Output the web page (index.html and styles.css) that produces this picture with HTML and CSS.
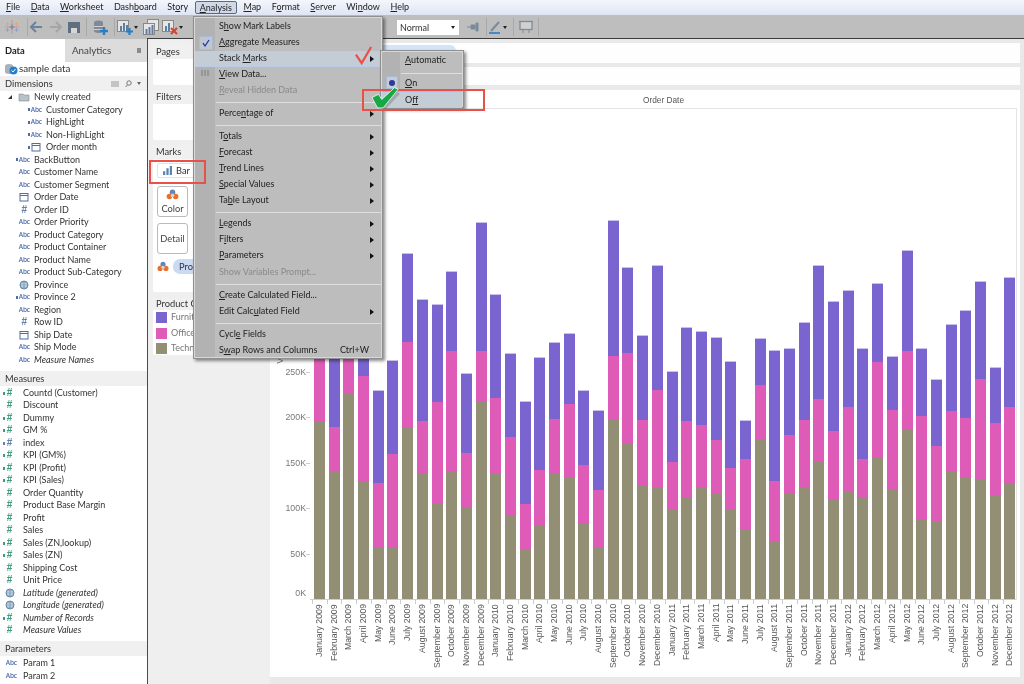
FILE: index.html
```html
<!DOCTYPE html>
<html lang="en">
<head>
<meta charset="utf-8">
<title>Tableau - Stack Marks</title>
<link rel="stylesheet" href="styles.css">
</head>
<body>
<svg class="defs" width="0" height="0">
  <symbol id="cal" viewBox="0 0 10 10"><rect x="1" y="1.5" width="8" height="7.5" fill="none" stroke="#4f6f9f"/><path d="M1 3.5h8" stroke="#4f6f9f"/></symbol>
  <symbol id="globe" viewBox="0 0 10 10"><circle cx="5" cy="5" r="4" fill="#cfdbe8" stroke="#5f87a8"/><path d="M1 5h8M5 1v8M2 2.8h6M2 7.2h6" stroke="#5f87a8" stroke-width=".6"/></symbol>
  <symbol id="mk" viewBox="0 0 14 12"><circle cx="7" cy="3.6" r="3" fill="#5f87b8"/><circle cx="3.6" cy="8.2" r="3" fill="#e8702a"/><circle cx="10.4" cy="8.2" r="3" fill="#e8702a"/><circle cx="7" cy="7" r="2" fill="#c9d4e2"/></symbol>
  <symbol id="barsico" viewBox="0 0 14 12"><path d="M1 7h3v5H1zM5.5 3h3v9h-3zM10 0h3v12h-3z" fill="#5b86ad"/></symbol>
</svg>
<div class="app">
  <nav class="menubar">
    <span class="mi"><u>F</u>ile</span><span class="mi"><u>D</u>ata</span><span class="mi"><u>W</u>orksheet</span><span class="mi">Dash<u>b</u>oard</span><span class="mi">St<u>o</u>ry</span><span class="mi mi-open"><u>A</u>nalysis</span><span class="mi"><u>M</u>ap</span><span class="mi">F<u>o</u>rmat</span><span class="mi"><u>S</u>erver</span><span class="mi">Wi<u>n</u>dow</span><span class="mi"><u>H</u>elp</span>
  </nav>

  <div class="toolbar">
    <svg class="tb" viewBox="0 0 16 16"><g opacity=".8"><path d="M8 1v14M1 8h14" stroke="#d88a80" stroke-width="1.100"/><path d="M3.500 3v4M1.500 5h4M12.500 3v4M10.500 5h4" stroke="#e6a060" stroke-width=".9"/><path d="M3.500 9v4M1.500 11h4M12.500 9v4M10.500 11h4" stroke="#7f9cc4" stroke-width=".9"/><path d="M8 5.500v5M5.500 8h5" stroke="#4f7fa8" stroke-width="1.100"/></g></svg>
    <i class="tsep ml7"></i>
    <svg class="tb" viewBox="0 0 16 16"><path d="M14 8H3M8 3 3 8l5 5" fill="none" stroke="#6d8299" stroke-width="2"/></svg>
    <svg class="tb ml4" viewBox="0 0 16 16"><path d="M2 8h11M8 3l5 5-5 5" fill="none" stroke="#a5a5a5" stroke-width="2"/></svg>
    <svg class="tb ml2" viewBox="0 0 16 16"><path d="M2 3h12v11H2z" fill="#5f6f80"/><path d="M5 9h6v5H5z" fill="#d6d6d6"/></svg>
    <i class="tsep ml4"></i>
    <svg class="tb ml5" viewBox="0 0 16 16"><ellipse cx="6.500" cy="3.500" rx="4.500" ry="2" fill="#7f8a96"/><path d="M2 4v8c0 1 2 2 4.500 2s4.500-1 4.500-2V4z" fill="#7f8a96"/><path d="M2 7.500h9M2 10.500h9" stroke="#d0d0d0"/><path d="M12 8v8M8 12h8" stroke="#2a7fc4" stroke-width="2.400"/></svg>
    <i class="tsep ml6"></i>
    <svg class="tb ml2" viewBox="0 0 16 16"><rect x=".5" y="1.500" width="11" height="11" fill="#e6e6e6" stroke="#888"/><path d="M3 7h2v5H3zM6 4h2v8H6zM9 6h2v6H9z" fill="#5f7f9f"/><path d="M12.500 9v7M9 12.500h7" stroke="#2a7fc4" stroke-width="2.200"/></svg>
    <i class="caret ml1"></i>
    <svg class="tb ml5" viewBox="0 0 16 16"><rect x="4.500" y=".5" width="11" height="11" fill="#e6e6e6" stroke="#888"/><rect x=".5" y="4.500" width="11" height="11" fill="#e6e6e6" stroke="#888"/><path d="M2.500 10h2v5h-2zM5.500 8h2v7h-2zM8.500 6h2v9h-2z" fill="#5f7f9f"/></svg>
    <svg class="tb ml3" viewBox="0 0 16 16"><rect x=".5" y="1.500" width="11" height="11" fill="#e6e6e6" stroke="#888"/><path d="M3 7h2v5H3zM6 4h2v8H6z" fill="#5f7f9f"/><path d="m9 9 6 6m0-6-6 6" stroke="#d0452f" stroke-width="2"/></svg>
    <i class="caret ml1"></i>
    <div class="tb-select">Normal<i class="caret caret-dark"></i></div>
    <svg class="tb ml6" viewBox="0 0 16 16"><path d="M2 8h4M6 6h4v4H6zM11 4h2v8h-2z" fill="#7a8a9a" stroke="#7a8a9a"/></svg>
    <i class="tsep ml5"></i>
    <svg class="tb" viewBox="0 0 16 16"><path d="M4 12 12 3" stroke="#7a8a9a" stroke-width="2"/><path d="M2 14h11" stroke="#4a86c8" stroke-width="2"/></svg>
    <i class="caret"></i>
    <i class="tsep ml6"></i>
    <svg class="tb ml4" viewBox="0 0 16 16"><rect x="2" y="2.500" width="12" height="8" fill="#d0d0d0" stroke="#7f8a96" stroke-width="1.300"/><path d="M5 11v3M11 11v3M1 2.500h14" stroke="#7f8a96"/></svg>
    <i class="tsep ml4"></i>
  </div>

  <div class="main">
    <aside class="side">
      <div class="tabs"><span class="tab tab-on">Data</span><span class="tab tab-off">Analytics<i class="tab-arrow"></i></span></div>
      <div class="source"><svg class="src-ic" viewBox="0 0 14 12"><ellipse cx="5" cy="3" rx="4" ry="2" fill="#a8b2bc"/><path d="M1 3v6c0 1 2 2 4 2s4-1 4-2V3z" fill="#a8b2bc"/><circle cx="9.500" cy="7.500" r="4" fill="#2a7fc4"/><path d="m7.500 7.500 1.500 1.500 2.500-3" stroke="#fff" fill="none"/></svg>sample data</div>
      <div class="sec-head">Dimensions<span class="sec-tools"><svg class="sec-ic" viewBox="0 0 9 8"><path d="M1 1v6M3 1v6M5 1v6M7 1v6" stroke="#999"/></svg><svg class="sec-ic" viewBox="0 0 8 8"><circle cx="4.500" cy="3" r="2.200" fill="none" stroke="#777"/><path d="M3 5 1 7" stroke="#777"/></svg><i class="caret caret-grey"></i></span></div>
      <ul class="fields dims">
        <li class="row"><span class="ic"><i class="tri"></i><svg class="folder" viewBox="0 0 12 9"><path d="M1 1h4l1 1h5v6H1z" fill="#b8c0c8" stroke="#7f8a96" stroke-width=".6"/></svg></span>Newly created</li>
        <li class="row nest"><span class="ic abc calc">Abc</span>Customer Category</li>
        <li class="row nest"><span class="ic abc calc">Abc</span>HighLight</li>
        <li class="row nest"><span class="ic abc calc">Abc</span>Non-HighLight</li>
        <li class="row nest"><span class="ic calc"><svg class="gly"><use href="#cal"/></svg></span>Order month</li>
        <li class="row"><span class="ic abc calc">Abc</span>BackButton</li>
        <li class="row"><span class="ic abc">Abc</span>Customer Name</li>
        <li class="row"><span class="ic abc">Abc</span>Customer Segment</li>
        <li class="row"><span class="ic"><svg class="gly"><use href="#cal"/></svg></span>Order Date</li>
        <li class="row"><span class="ic hash dimhash">#</span>Order ID</li>
        <li class="row"><span class="ic abc">Abc</span>Order Priority</li>
        <li class="row"><span class="ic abc">Abc</span>Product Category</li>
        <li class="row"><span class="ic abc">Abc</span>Product Container</li>
        <li class="row"><span class="ic abc">Abc</span>Product Name</li>
        <li class="row"><span class="ic abc">Abc</span>Product Sub-Category</li>
        <li class="row"><span class="ic"><svg class="gly"><use href="#globe"/></svg></span>Province</li>
        <li class="row"><span class="ic abc calc">Abc</span>Province 2</li>
        <li class="row"><span class="ic abc">Abc</span>Region</li>
        <li class="row"><span class="ic hash dimhash">#</span>Row ID</li>
        <li class="row"><span class="ic"><svg class="gly"><use href="#cal"/></svg></span>Ship Date</li>
        <li class="row"><span class="ic abc">Abc</span>Ship Mode</li>
        <li class="row it"><span class="ic abc">Abc</span>Measure Names</li>
      </ul>
      <div class="sec-head sec-measures">Measures</div>
      <ul class="fields meas">
        <li class="row"><span class="ic hash calc">#</span>Countd (Customer)</li>
        <li class="row"><span class="ic hash">#</span>Discount</li>
        <li class="row"><span class="ic hash calc">#</span>Dummy</li>
        <li class="row"><span class="ic hash calc">#</span>GM %</li>
        <li class="row"><span class="ic hash calc dimhash">#</span>index</li>
        <li class="row"><span class="ic hash calc">#</span>KPI (GM%)</li>
        <li class="row"><span class="ic hash calc">#</span>KPI (Profit)</li>
        <li class="row"><span class="ic hash calc">#</span>KPI (Sales)</li>
        <li class="row"><span class="ic hash">#</span>Order Quantity</li>
        <li class="row"><span class="ic hash">#</span>Product Base Margin</li>
        <li class="row"><span class="ic hash">#</span>Profit</li>
        <li class="row"><span class="ic hash">#</span>Sales</li>
        <li class="row"><span class="ic hash calc">#</span>Sales (ZN,lookup)</li>
        <li class="row"><span class="ic hash calc">#</span>Sales (ZN)</li>
        <li class="row"><span class="ic hash">#</span>Shipping Cost</li>
        <li class="row"><span class="ic hash">#</span>Unit Price</li>
        <li class="row it"><span class="ic"><svg class="gly"><use href="#globe"/></svg></span>Latitude (generated)</li>
        <li class="row it"><span class="ic"><svg class="gly"><use href="#globe"/></svg></span>Longitude (generated)</li>
        <li class="row it"><span class="ic hash calc">#</span>Number of Records</li>
        <li class="row it"><span class="ic hash">#</span>Measure Values</li>
      </ul>
      <div class="sec-head sec-params">Parameters</div>
      <ul class="fields meas">
        <li class="row"><span class="ic abc">Abc</span>Param 1</li>
        <li class="row"><span class="ic abc">Abc</span>Param 2</li>
      </ul>
    </aside>

    <div class="cards">
      <section class="card c-pages"><h3>Pages</h3></section>
      <section class="card c-filters"><h3>Filters</h3></section>
      <section class="card c-marks">
        <h3>Marks</h3>
        <div class="mark-type"><svg class="mt-ic"><use href="#barsico"/></svg>Bar</div>
        <div class="mark-btn"><svg class="mb-ic"><use href="#mk"/></svg>Color</div>
        <div class="mark-btn mark-btn-detail">Detail</div>
        <div class="mark-pill"><svg class="mp-ic"><use href="#mk"/></svg><span class="pill">Product Category</span></div>
      </section>
      <section class="card c-legend">
        <h3>Product Category</h3>
        <div class="lg"><i class="sw furn"></i>Furniture</div>
        <div class="lg"><i class="sw off"></i>Office Supplies</div>
        <div class="lg"><i class="sw tech"></i>Technology</div>
      </section>
    </div>

    <div class="view">
      <div class="shelf"><span class="shelf-pill"></span></div>
      <div class="shelf shelf-rows"></div>
      <div class="chart">
        <div class="chart-title">Order Date</div>
        <div class="pane">
          <div class="yaxis">
            <span class="ytitle">Value</span>
            <span class="yl">250K</span><span class="yl">200K</span><span class="yl">150K</span><span class="yl">100K</span><span class="yl">50K</span><span class="yl yl0">0K</span>
          </div>
          <div class="plot">
            <div class="bar"><i class="furn" style="height:50px"></i><i class="off" style="height:72px"></i><i class="tech" style="height:178px"></i></div>
            <div class="bar"><i class="furn" style="height:128px"></i><i class="off" style="height:45px"></i><i class="tech" style="height:127px"></i></div>
            <div class="bar"><i class="furn" style="height:40px"></i><i class="off" style="height:54px"></i><i class="tech" style="height:206px"></i></div>
            <div class="bar"><i class="furn" style="height:77px"></i><i class="off" style="height:106px"></i><i class="tech" style="height:117px"></i></div>
            <div class="bar"><i class="furn" style="height:93px"></i><i class="off" style="height:64px"></i><i class="tech" style="height:52px"></i></div>
            <div class="bar"><i class="furn" style="height:94px"></i><i class="off" style="height:93px"></i><i class="tech" style="height:52px"></i></div>
            <div class="bar"><i class="furn" style="height:89px"></i><i class="off" style="height:86px"></i><i class="tech" style="height:171px"></i></div>
            <div class="bar"><i class="furn" style="height:122px"></i><i class="off" style="height:52px"></i><i class="tech" style="height:126px"></i></div>
            <div class="bar"><i class="furn" style="height:98px"></i><i class="off" style="height:102px"></i><i class="tech" style="height:95px"></i></div>
            <div class="bar"><i class="furn" style="height:80px"></i><i class="off" style="height:120px"></i><i class="tech" style="height:128px"></i></div>
            <div class="bar"><i class="furn" style="height:80px"></i><i class="off" style="height:54px"></i><i class="tech" style="height:92px"></i></div>
            <div class="bar"><i class="furn" style="height:129px"></i><i class="off" style="height:50px"></i><i class="tech" style="height:198px"></i></div>
            <div class="bar"><i class="furn" style="height:104px"></i><i class="off" style="height:76px"></i><i class="tech" style="height:125px"></i></div>
            <div class="bar"><i class="furn" style="height:84px"></i><i class="off" style="height:78px"></i><i class="tech" style="height:84px"></i></div>
            <div class="bar"><i class="furn" style="height:103px"></i><i class="off" style="height:46px"></i><i class="tech" style="height:49px"></i></div>
            <div class="bar"><i class="furn" style="height:113px"></i><i class="off" style="height:55px"></i><i class="tech" style="height:74px"></i></div>
            <div class="bar"><i class="furn" style="height:77px"></i><i class="off" style="height:55px"></i><i class="tech" style="height:125px"></i></div>
            <div class="bar"><i class="furn" style="height:71px"></i><i class="off" style="height:74px"></i><i class="tech" style="height:121px"></i></div>
            <div class="bar"><i class="furn" style="height:75px"></i><i class="off" style="height:58px"></i><i class="tech" style="height:76px"></i></div>
            <div class="bar"><i class="furn" style="height:80px"></i><i class="off" style="height:58px"></i><i class="tech" style="height:51px"></i></div>
            <div class="bar"><i class="furn" style="height:136px"></i><i class="off" style="height:64px"></i><i class="tech" style="height:179px"></i></div>
            <div class="bar"><i class="furn" style="height:86px"></i><i class="off" style="height:91px"></i><i class="tech" style="height:155px"></i></div>
            <div class="bar"><i class="furn" style="height:85px"></i><i class="off" style="height:65px"></i><i class="tech" style="height:114px"></i></div>
            <div class="bar"><i class="furn" style="height:125px"></i><i class="off" style="height:97px"></i><i class="tech" style="height:112px"></i></div>
            <div class="bar"><i class="furn" style="height:91px"></i><i class="off" style="height:48px"></i><i class="tech" style="height:89px"></i></div>
            <div class="bar"><i class="furn" style="height:94px"></i><i class="off" style="height:77px"></i><i class="tech" style="height:101px"></i></div>
            <div class="bar"><i class="furn" style="height:94px"></i><i class="off" style="height:63px"></i><i class="tech" style="height:111px"></i></div>
            <div class="bar"><i class="furn" style="height:103px"></i><i class="off" style="height:53px"></i><i class="tech" style="height:106px"></i></div>
            <div class="bar"><i class="furn" style="height:107px"></i><i class="off" style="height:42px"></i><i class="tech" style="height:89px"></i></div>
            <div class="bar"><i class="furn" style="height:39px"></i><i class="off" style="height:71px"></i><i class="tech" style="height:69px"></i></div>
            <div class="bar"><i class="furn" style="height:47px"></i><i class="off" style="height:55px"></i><i class="tech" style="height:159px"></i></div>
            <div class="bar"><i class="furn" style="height:131px"></i><i class="off" style="height:60px"></i><i class="tech" style="height:58px"></i></div>
            <div class="bar"><i class="furn" style="height:87px"></i><i class="off" style="height:59px"></i><i class="tech" style="height:105px"></i></div>
            <div class="bar"><i class="furn" style="height:98px"></i><i class="off" style="height:67px"></i><i class="tech" style="height:112px"></i></div>
            <div class="bar"><i class="furn" style="height:134px"></i><i class="off" style="height:62px"></i><i class="tech" style="height:138px"></i></div>
            <div class="bar"><i class="furn" style="height:130px"></i><i class="off" style="height:68px"></i><i class="tech" style="height:100px"></i></div>
            <div class="bar"><i class="furn" style="height:117px"></i><i class="off" style="height:85px"></i><i class="tech" style="height:107px"></i></div>
            <div class="bar"><i class="furn" style="height:111px"></i><i class="off" style="height:39px"></i><i class="tech" style="height:101px"></i></div>
            <div class="bar"><i class="furn" style="height:79px"></i><i class="off" style="height:95px"></i><i class="tech" style="height:142px"></i></div>
            <div class="bar"><i class="furn" style="height:54px"></i><i class="off" style="height:80px"></i><i class="tech" style="height:109px"></i></div>
            <div class="bar"><i class="furn" style="height:101px"></i><i class="off" style="height:78px"></i><i class="tech" style="height:170px"></i></div>
            <div class="bar"><i class="furn" style="height:68px"></i><i class="off" style="height:103px"></i><i class="tech" style="height:80px"></i></div>
            <div class="bar"><i class="furn" style="height:67px"></i><i class="off" style="height:76px"></i><i class="tech" style="height:77px"></i></div>
            <div class="bar"><i class="furn" style="height:87px"></i><i class="off" style="height:61px"></i><i class="tech" style="height:127px"></i></div>
            <div class="bar"><i class="furn" style="height:108px"></i><i class="off" style="height:59px"></i><i class="tech" style="height:122px"></i></div>
            <div class="bar"><i class="furn" style="height:98px"></i><i class="off" style="height:100px"></i><i class="tech" style="height:120px"></i></div>
            <div class="bar"><i class="furn" style="height:56px"></i><i class="off" style="height:73px"></i><i class="tech" style="height:103px"></i></div>
            <div class="bar"><i class="furn" style="height:130px"></i><i class="off" style="height:76px"></i><i class="tech" style="height:116px"></i></div>
          </div>
        </div>
        <div class="xlabels">
          <span>January 2009</span><span>February 2009</span><span>March 2009</span><span>April 2009</span><span>May 2009</span><span>June 2009</span><span>July 2009</span><span>August 2009</span><span>September 2009</span><span>October 2009</span><span>November 2009</span><span>December 2009</span>
          <span>January 2010</span><span>February 2010</span><span>March 2010</span><span>April 2010</span><span>May 2010</span><span>June 2010</span><span>July 2010</span><span>August 2010</span><span>September 2010</span><span>October 2010</span><span>November 2010</span><span>December 2010</span>
          <span>January 2011</span><span>February 2011</span><span>March 2011</span><span>April 2011</span><span>May 2011</span><span>June 2011</span><span>July 2011</span><span>August 2011</span><span>September 2011</span><span>October 2011</span><span>November 2011</span><span>December 2011</span>
          <span>January 2012</span><span>February 2012</span><span>March 2012</span><span>April 2012</span><span>May 2012</span><span>June 2012</span><span>July 2012</span><span>August 2012</span><span>September 2012</span><span>October 2012</span><span>November 2012</span><span>December 2012</span>
        </div>
      </div>
    </div>
  </div>

  <div class="menu">
    <div class="item"><span>S<u>h</u>ow Mark Labels</span></div>
    <div class="item"><span class="chk"><svg viewBox="0 0 10 10"><path d="m2 5 2 3 4-6" fill="none" stroke="#1a2aa8" stroke-width="1.200"/></svg></span><span><u>A</u>ggregate Measures</span></div>
    <div class="item item-hot"><span>Stack <u>M</u>arks</span><i class="arr"></i></div>
    <div class="item"><span class="grid-ic"></span><span><u>V</u>iew Data...</span></div>
    <div class="item item-dis"><span><u>R</u>eveal Hidden Data</span></div>
    <hr>
    <div class="item"><span>Perce<u>n</u>tage of</span><i class="arr"></i></div>
    <hr>
    <div class="item"><span>T<u>o</u>tals</span><i class="arr"></i></div>
    <div class="item"><span><u>F</u>orecast</span><i class="arr"></i></div>
    <div class="item"><span><u>T</u>rend Lines</span><i class="arr"></i></div>
    <div class="item"><span><u>S</u>pecial Values</span><i class="arr"></i></div>
    <div class="item"><span>Ta<u>b</u>le Layout</span><i class="arr"></i></div>
    <hr>
    <div class="item"><span><u>L</u>egends</span><i class="arr"></i></div>
    <div class="item"><span>F<u>i</u>lters</span><i class="arr"></i></div>
    <div class="item"><span><u>P</u>arameters</span><i class="arr"></i></div>
    <div class="item item-dis item-low"><span>Show Variables Prompt...</span></div>
    <hr>
    <div class="item"><span><u>C</u>reate Calculated Field...</span></div>
    <div class="item"><span>Edit Calc<u>u</u>lated Field</span><i class="arr"></i></div>
    <hr>
    <div class="item"><span>Cycl<u>e</u> Fields</span></div>
    <div class="item"><span>S<u>w</u>ap Rows and Columns</span><span class="short">Ctrl+W</span></div>
  </div>

  <div class="submenu">
    <div class="item sub-first"><span><u>A</u>utomatic</span></div>
    <hr>
    <div class="item"><span class="radio"><i></i></span><span><u>O</u>n</span></div>
    <div class="item item-hot item-low"><span>O<u>f</u>f</span></div>
  </div>

  <i class="redbox redbox-marks"></i>
  <i class="redbox redbox-off"></i>
  <svg class="tick tick-red" viewBox="0 0 20 22"><path d="M1 9 7 18 17 1" fill="none" stroke="#e8524a" stroke-width="2.400"/></svg>
  <svg class="tick tick-green" viewBox="0 0 32 26"><path d="M4 16 9 25h6L31 8l-3-2-3-1-13 12-2-4z" fill="#8a8a8a" opacity=".55"/><path d="M1 12 7 23h6L29 3l-4-1.500L11.500 14 8 8.500z" fill="#16a845" stroke="#fff" stroke-width=".8"/></svg>
</div>
</body>
</html>
```
FILE: styles.css
```css
* { box-sizing: border-box; }
html, body { margin: 0; padding: 0; }
body { width: 1024px; height: 684px; overflow: hidden; background: #efefef; }
.defs { position: absolute; }
.app {
  position: relative; width: 1024px; height: 684px; overflow: hidden;
  font: 9.300px/1.2 Lato, "Open Sans", sans-serif; color: #333;
  display: flex; flex-direction: column; filter: blur(.35px);
}
ul { list-style: none; margin: 0; padding: 0; }
h3 { margin: 0; font: inherit; }

/* menu bar */
.menubar {
  height: 15px; flex: none; display: flex; align-items: center; gap: 10.500px; padding-left: 6px;
  background: linear-gradient(#f4f6fc, #dfe5f4); color: #222; font-size: 9px;
}
.mi-open { margin: 0 -4px; padding: 0 4px; height: 13px; line-height: 11px; border: 1px solid #5a6a80; border-radius: 2px; background: #cfd9ea; }

/* toolbar */
.toolbar {
  height: 24px; flex: none; display: flex; align-items: center; padding-left: 4px;
  background: #bebebe; position: relative;
}
.toolbar::after { content: ""; position: absolute; left: 147px; right: 0; bottom: 0; height: 1px; background: #3c3c3c; }
.tb { width: 16px; height: 16px; flex: none; }
.tsep { width: 1px; height: 18px; background: #a8a8a8; flex: none; }
.caret { width: 0; height: 0; flex: none; border: 2.500px solid transparent; border-top: 3px solid #222; border-bottom: 0; }
.caret-grey { border-top-color: #666; }
.ml1 { margin-left: 1px; } .ml2 { margin-left: 2px; } .ml3 { margin-left: 3px; } .ml4 { margin-left: 4px; }
.ml5 { margin-left: 5px; } .ml6 { margin-left: 6px; } .ml7 { margin-left: 7px; }
.tb-select {
  margin-left: 214px; width: 62px; height: 15px; line-height: 15px; padding: 0 4px 0 3px; flex: none;
  background: #fff; font-size: 9px; display: flex; align-items: center; justify-content: space-between;
}

/* body */
.main { flex: 1; min-height: 0; display: flex; }
.side { width: 148px; flex: none; background: #fff; border-right: 1.500px solid #4a4a4a; }
.tabs { display: flex; height: 23px; }
.tab { display: flex; align-items: center; }
.tab-on { width: 65px; padding-left: 5px; font-weight: 700; color: #222; }
.tab-off { flex: 1; padding-left: 7px; background: #dcdcdc; position: relative; color: #444; font-size: 9.800px; }
.tab-arrow { position: absolute; right: 6px; top: 9px; width: 4px; height: 5px; background: #8a8a8a; }
.source { height: 14px; display: flex; align-items: center; padding-left: 4px; gap: 1px; font-size: 9.800px; }
.src-ic { width: 14px; height: 12px; }
.sec-head { height: 15px; line-height: 15px; padding-left: 5px; background: #f0f0f0; position: relative; display: flex; justify-content: space-between; align-items: center; color: #333; }
.sec-tools { display: flex; align-items: center; gap: 4px; padding-right: 6px; }
.sec-ic { width: 9px; height: 8px; }
.sec-measures { margin-top: 4.500px; }
.sec-params { margin-top: 4.500px; }
.meas { margin-top: 1px; }
.row { height: 12.500px; line-height: 12.500px; display: flex; align-items: center; white-space: nowrap; color: #333; font-size: 9px; }
.it { font-style: italic; }
.dims .ic { width: 30px; margin-right: 4px; }
.dims .nest { padding-left: 12px; }
.meas .ic { width: 19px; margin-right: 4px; }
.ic { flex: none; display: flex; align-items: center; justify-content: flex-end; position: relative; height: 12px; }
.meas .ic { justify-content: center; }
.meas .abc { justify-content: flex-end; padding-right: 2px; }
.abc { font: 600 6.500px/12px "Open Sans", sans-serif; color: #4c6cab; letter-spacing: -.1px; }
.hash { font: 700 10px/12px "Liberation Sans", sans-serif; color: #3e9a7c; }
.dimhash { color: #5f7fa8; }
.dims .hash { padding-right: 3px; }
.calc::before { content: ""; width: 2px; height: 3px; margin-right: 1px; background: currentColor; }
.meas .hash.calc::before { position: absolute; left: 3px; top: 5px; }
.gly { width: 10px; height: 10px; }
.dims .ic > .gly { margin-right: 1px; }
.calc:has(.gly)::before { background: #4f6f9f; }
.tri { width: 0; height: 0; border-left: 4px solid transparent; border-bottom: 4px solid #333; margin-right: 6px; }
.folder { width: 12px; height: 9px; }

/* cards column */
.cards { width: 122px; flex: none; padding: 6px 0 0 5px; display: flex; flex-direction: column; background: #efefef; }
.card { background: #fff; border-radius: 2px; position: relative; overflow: hidden; white-space: nowrap; }
.card h3 { height: 14px; line-height: 14px; padding-left: 3px; background: #f0f0f0; color: #333; font-size: 9.300px; }
.c-pages { height: 40px; }
.c-filters { height: 50px; margin-top: 5px; }
.c-marks { height: 147px; margin-top: 5px; padding-bottom: 4px; }
.c-legend { height: 57px; margin-top: 6px; }
.c-legend h3 { height: 12px; line-height: 12px; }
.mark-type { margin: 4px 0 0 4px; width: 60px; height: 15px; display: flex; align-items: center; gap: 3px; padding-left: 4px; border: 1px solid #e2e2e2; border-radius: 2px; }
.mt-ic { width: 11px; height: 9px; }
.mark-btn { margin: 8px 0 0 4px; width: 31px; height: 31px; border: 1px solid #bbb; border-radius: 3px; display: flex; flex-direction: column; align-items: center; justify-content: center; gap: 3px; font-size: 9.300px; color: #444; }
.mark-btn-detail { margin-top: 6px; }
.mb-ic { width: 13px; height: 11px; }
.mark-pill { margin: 5px 0 0 4px; display: flex; align-items: center; gap: 4px; }
.mp-ic { width: 12px; height: 11px; }
.pill { background: #c9daf2; border-radius: 7px; padding: 0 6px; height: 15px; line-height: 15px; }
.lg { height: 15.500px; display: flex; align-items: center; gap: 4px; padding-left: 3px; color: #777; font-size: 9px; }
.sw { width: 11px; height: 11px; flex: none; }
.furn { background: #7a64d0; }
.off { background: #de5cb8; }
.tech { background: #938f75; }

/* view */
.view { flex: 1; min-width: 0; padding: 4px 4px 7px 0; display: flex; flex-direction: column; background: #e9e9e9; }
.shelf { height: 20px; flex: none; background: #fefefe; position: relative; }
.shelf-rows { height: 18px; margin-top: 4px; }
.shelf-pill { position: absolute; right: 564px; top: 2px; width: 160px; height: 18px; background: #d4e3f7; border-radius: 6px 6px 0 0; }
.chart { margin-top: 5px; flex: 1; min-height: 0; background: #fff; display: flex; flex-direction: column; padding-right: 3px; }
.chart-title { height: 18px; flex: none; padding-left: 40px; text-align: center; font: 8.300px/20px "Liberation Sans", sans-serif; color: #555; }
.pane { height: 492px; flex: none; display: flex; align-items: flex-end; border-top: 1px solid #e4e4e4; border-right: 1px solid #e4e4e4; margin-left: 40px; position: relative; }
.yaxis { position: absolute; right: 100%; bottom: 1px; width: 40px; display: flex; flex-direction: column; gap: 33.400px; font: 8.800px/12px "Liberation Sans", sans-serif; color: #777; text-align: right; padding-right: 4px; }
.yl { height: 12px; position: relative; }
.yl::after { content: ""; position: absolute; left: 100%; top: 6px; width: 4px; height: 1px; background: #ccc; }
.yl0 { margin-top: -6px; }
.yl0::after { display: none; }
.ytitle { position: absolute; left: 4px; bottom: 235px; writing-mode: vertical-rl; transform: rotate(180deg); }
.plot { flex: 1; display: flex; align-items: flex-end; gap: 3.700px; padding-left: 4px; border-bottom: 1px solid #cfcfcf; height: 100%; }
.bar { width: 11px; flex: none; display: flex; flex-direction: column; }
.bar i { display: block; }
.bar i:first-child { border-top: 1px solid #c9c0ee; }
.xlabels {
  margin-left: 42px; padding: 4px 0 0 2px; flex: 1; min-height: 0; display: flex; gap: 3.700px;
  background: repeating-linear-gradient(90deg, #ccc 0 1px, transparent 1px 14.700px) 0 0 / 100% 4px no-repeat;
}
.xlabels span { width: 11px; flex: none; height: 70px; writing-mode: vertical-rl; transform: rotate(180deg); text-align: end; font: 8.700px/11px "Liberation Sans", sans-serif; color: #555; white-space: nowrap; }

/* popup menus */
.menu, .submenu { position: absolute; background: #bdbdbd; border: 1px solid #8f8f8f; outline: 1px solid #d8d8d8; outline-offset: -2px; box-shadow: 2px 2px 3px rgba(0,0,0,.45); color: #222; font-size: 9px; }
.menu { left: 193px; top: 16px; width: 190px; height: 343px; padding: 1.500px 1px; background: linear-gradient(90deg, #b2b2b2 21px, #bdbdbd 21px); }
.submenu { left: 380px; top: 50px; width: 84px; height: 58px; padding: 0 1px; background: linear-gradient(90deg, #b2b2b2 19px, #bdbdbd 19px); }
.item { height: 16px; display: flex; align-items: center; padding-left: 24px; padding-right: 8px; position: relative; white-space: nowrap; }
.item-hot { background: #c4ccd6; box-shadow: inset 0 0 0 1px #b9cde8; }
.item-dis { color: #8a8a8a; }
.item-low { margin-top: 1px; }
.menu hr, .submenu hr { margin: 3px 0 3px 21px; height: 1px; border: 0; background: #dedede; }
.arr { position: absolute; right: 7px; top: 5px; border: 3px solid transparent; border-left: 4px solid #111; border-right: 0; }
.short { margin-left: auto; padding-right: 4px; }
.chk { position: absolute; left: 4px; top: 1px; width: 14px; height: 14px; border: 1px solid #a8bcd8; background: #c0c6d0; display: flex; align-items: center; justify-content: center; }
.chk svg { width: 10px; height: 10px; }
.grid-ic { position: absolute; left: 6px; top: 3px; width: 9px; height: 6px; background: repeating-linear-gradient(90deg, #969696 0 2px, #b2b2b2 2px 3px); }
.submenu .item { padding-left: 23px; padding-right: 2px; }
.submenu hr { margin: 3px 0 1px 19px; }
.sub-first { height: 19px; }
.radio { position: absolute; left: 4px; top: 1px; width: 12px; height: 13px; border: 1px solid #a8bcd8; background: #c4ccd6; display: flex; align-items: center; justify-content: center; }
.radio i { width: 6px; height: 6px; border-radius: 50%; background: #33369a; }

/* annotations */
.redbox { position: absolute; border: 2px solid #e8504a; pointer-events: none; }
.redbox-marks { left: 149px; top: 160px; width: 57px; height: 24px; }
.redbox-off { left: 362px; top: 89px; width: 123px; height: 22px; }
.tick { position: absolute; }
.tick-red { left: 355px; top: 46px; width: 19px; height: 21px; }
.tick-green { left: 371px; top: 86px; width: 30px; height: 25px; }
```
